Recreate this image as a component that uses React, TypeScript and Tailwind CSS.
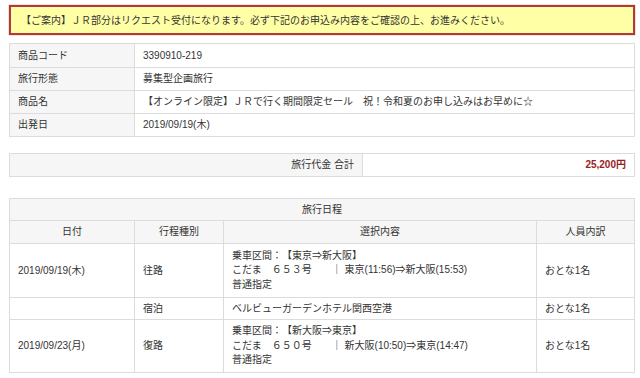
import React from "react";

const font = { fontFamily: '"Liberation Sans", "Noto Sans CJK JP", sans-serif' };

export default function App() {
  const td = "border border-[#dcdcdc] px-2 py-0 leading-[14px] align-middle";
  const ln = "h-[14.5px] leading-[14.5px] overflow-visible whitespace-nowrap";
  return (
    <div className="w-[640px] h-[378px] bg-white text-[#333] text-[10px] overflow-hidden [text-spacing-trim:space-all]" style={font}>
      <div className="pl-[9px] pr-[5px] pt-[5px]">
        <div className="h-[30px] border-2 border-[#b23a3a] bg-[#ffffa6] flex items-center pl-[10px] shadow-[0_0_1px_#b23a3a]">
          【ご案内】ＪＲ部分はリクエスト受付になります。必ず下記のお申込み内容をご確認の上、お進みください。
        </div>

        <table className="mt-[8px] w-[626px] border-collapse table-fixed">
          <colgroup>
            <col className="w-[125px]" />
            <col />
          </colgroup>
          <tbody>
            <tr className="h-[24px]">
              <td className={`${td} bg-[#f6f6f6]`}>商品コード</td>
              <td className={td}>3390910-219</td>
            </tr>
            <tr className="h-[23px]">
              <td className={`${td} bg-[#f6f6f6]`}>旅行形態</td>
              <td className={td}>募集型企画旅行</td>
            </tr>
            <tr className="h-[23px]">
              <td className={`${td} bg-[#f6f6f6]`}>商品名</td>
              <td className={td}>【オンライン限定】ＪＲで行く期間限定セール　祝！令和夏のお申し込みはお早めに☆</td>
            </tr>
            <tr className="h-[23px]">
              <td className={`${td} bg-[#f6f6f6]`}>出発日</td>
              <td className={td}>2019/09/19(木)</td>
            </tr>
          </tbody>
        </table>

        <table className="mt-[16px] w-[626px] border-collapse table-fixed">
          <colgroup>
            <col className="w-[353px]" />
            <col />
          </colgroup>
          <tbody>
            <tr className="h-[23px]">
              <td className={`${td} bg-[#f6f6f6] text-right`}>旅行代金 合計</td>
              <td className={`${td} text-right font-bold text-[#9b1c1c]`}>25,200円</td>
            </tr>
          </tbody>
        </table>

        <table className="mt-[21px] w-[626px] border-collapse table-fixed">
          <colgroup>
            <col className="w-[125px]" />
            <col className="w-[89px]" />
            <col className="w-[313px]" />
            <col />
          </colgroup>
          <tbody>
            <tr className="h-[22px]">
              <td colSpan={4} className={`${td} bg-[#f6f6f6] text-center`}>旅行日程</td>
            </tr>
            <tr className="h-[23px]">
              <td className={`${td} bg-[#f6f6f6] text-center`}>日付</td>
              <td className={`${td} bg-[#f6f6f6] text-center`}>行程種別</td>
              <td className={`${td} bg-[#f6f6f6] text-center`}>選択内容</td>
              <td className={`${td} bg-[#f6f6f6] text-center`}>人員内訳</td>
            </tr>
            <tr className="h-[54px]">
              <td className={td}>2019/09/19(木)</td>
              <td className={td}>往路</td>
              <td className={td}>
                <div className={ln}>乗車区間：【東京⇒新大阪】</div>
                <div className={ln}>こだま　６５３号　　｜ 東京(11:56)⇒新大阪(15:53)</div>
                <div className={ln}>普通指定</div>
              </td>
              <td className={td}>おとな1名</td>
            </tr>
            <tr className="h-[22px]">
              <td className={td}></td>
              <td className={td}>宿泊</td>
              <td className={td}>ベルビューガーデンホテル関西空港</td>
              <td className={td}>おとな1名</td>
            </tr>
            <tr className="h-[53px]">
              <td className={td}>2019/09/23(月)</td>
              <td className={td}>復路</td>
              <td className={td}>
                <div className={ln}>乗車区間：【新大阪⇒東京】</div>
                <div className={ln}>こだま　６５０号　　｜ 新大阪(10:50)⇒東京(14:47)</div>
                <div className={ln}>普通指定</div>
              </td>
              <td className={td}>おとな1名</td>
            </tr>
          </tbody>
        </table>
      </div>
    </div>
  );
}
